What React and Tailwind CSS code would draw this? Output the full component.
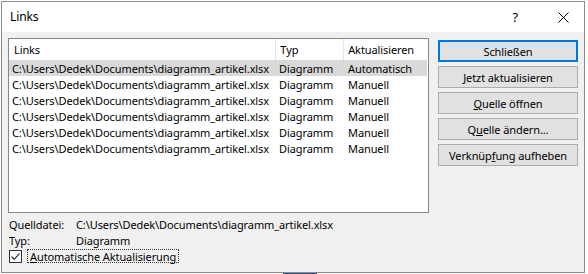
import React from "react";

const path = "C:\\Users\\Dedek\\Documents\\diagramm_artikel.xlsx";

const rows = [
  { file: path, type: "Diagramm", update: "Automatisch", selected: true },
  { file: path, type: "Diagramm", update: "Manuell" },
  { file: path, type: "Diagramm", update: "Manuell" },
  { file: path, type: "Diagramm", update: "Manuell" },
  { file: path, type: "Diagramm", update: "Manuell" },
  { file: path, type: "Diagramm", update: "Manuell" },
];

const DialogButton = ({ children, primary }) => (
  <button
    className={
      "h-[22px] w-[140px] flex items-center justify-center bg-[#e1e1e1] text-black " +
      (primary ? "border-2 border-[#0078d7]" : "border border-[#adadad]")
    }
  >
    {children}
  </button>
);

export default function App() {
  return (
    <div className="w-[588px] h-[274px] bg-white overflow-hidden font-['Segoe_UI','Noto_Sans',sans-serif] text-[11px] tracking-[-0.1px] text-black leading-none">
      {/* Links dialog */}
      <div className="ml-[1px] mt-[1px] w-[584px] h-[272px] border border-[#8a8a8a] bg-[#f0f0f0] flex flex-col">
        {/* Title bar */}
        <div className="h-[30px] bg-white flex items-center pl-[8px]">
          <span className="text-[12px]">Links</span>
          <span className="ml-auto text-[13px] mr-[40px]">?</span>
          <svg width="11" height="11" viewBox="0 0 11 11" className="mr-[15px]">
            <path d="M0.5 0.5 L10.5 10.5 M10.5 0.5 L0.5 10.5" stroke="#000" strokeWidth="1" />
          </svg>
        </div>

        <div className="flex pt-[6px] pl-[6px]">
          {/* List of links */}
          <div className="w-[421px] h-[175px] bg-white border border-[#828790] flex flex-col">
            <div className="h-[21px] flex items-center pr-[2px]">
              <div className="w-[268px] h-full flex items-center pl-[5px] border-r border-[#e5e5e5]">Links</div>
              <div className="w-[68px] h-full flex items-center pl-[4px] border-r border-[#e5e5e5]">Typ</div>
              <div className="w-[82px] h-full flex items-center pl-[4px]">Aktualisieren</div>
            </div>
            {rows.map((r, i) => (
              <div
                key={i}
                className={"h-[16px] w-[418px] flex items-center " + (r.selected ? "bg-[#d9d9d9]" : "")}
              >
                <div className="w-[268px] pl-[3px] whitespace-nowrap">{r.file}</div>
                <div className="w-[68px] pl-[2px]">{r.type}</div>
                <div className="w-[82px] pl-[3px]">{r.update}</div>
              </div>
            ))}
          </div>

          {/* Buttons */}
          <div className="flex flex-col gap-[4px] ml-[9px] mt-[2px]">
            <DialogButton primary>Schließen</DialogButton>
            <DialogButton>
              <span><span className="underline">J</span>etzt aktualisieren</span>
            </DialogButton>
            <DialogButton>
              <span><span className="underline">Q</span>uelle öffnen</span>
            </DialogButton>
            <DialogButton>
              <span>Q<span className="underline">u</span>elle ändern...</span>
            </DialogButton>
            <DialogButton>
              <span>Verknüp<span className="underline">f</span>ung aufheben</span>
            </DialogButton>
          </div>
        </div>

        {/* Source details */}
        <div className="flex flex-col pl-[7px] mt-[3px]">
          <div className="flex h-[16px] items-center">
            <span className="w-[67px]">Quelldatei:</span>
            <span>{path}</span>
          </div>
          <div className="flex h-[16px] items-center">
            <span className="w-[67px]">Typ:</span>
            <span>Diagramm</span>
          </div>
          <div className="flex items-center mt-[1px] h-[14px]">
            <div className="w-[13px] h-[13px] border border-[#333] bg-white flex items-center justify-center">
              <svg width="11" height="11" viewBox="0 0 11 11">
                <path d="M1.5 5.5 L4.2 8.3 L9.5 2.5" fill="none" stroke="#333" strokeWidth="1.2" />
              </svg>
            </div>
            <span className="ml-[5px] px-[2px] h-[14px] flex items-center border border-dotted border-[#333]">
              <span><span className="underline">A</span>utomatische Aktualisierung</span>
            </span>
          </div>
        </div>
      </div>

      {/* Document content peeking out under the dialog */}
      <div className="flex h-[1px] overflow-hidden">
        <div className="ml-[283px] w-[34px] h-[4px] bg-[#2b579a]" />
      </div>
    </div>
  );
}
